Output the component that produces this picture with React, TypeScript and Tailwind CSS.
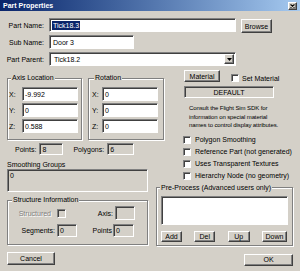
import type { ReactNode } from 'react'

// classic win2k 3d edges
const sunken =
  'border border-t-[#808080] border-l-[#808080] border-b-white border-r-white shadow-[inset_1px_1px_0_#404040]'
const raised =
  'border border-t-white border-l-white border-b-[#404040] border-r-[#404040] shadow-[inset_-1px_-1px_0_#808080]'

function Field({ className, gray, children }: { className: string; gray?: boolean; children?: ReactNode }) {
  return (
    <div className={`${sunken} ${gray ? 'bg-[#d4d0c8]' : 'bg-white'} flex items-center pl-[2px] shrink-0 ${className}`}>
      {children}
    </div>
  )
}

function Btn({ className, children }: { className: string; children: ReactNode }) {
  return (
    <div className={`${raised} bg-[#d4d0c8] flex items-center justify-center shrink-0 ${className}`}>{children}</div>
  )
}

function Check() {
  return <div className={`${sunken} bg-white w-[8px] h-[8px] shrink-0`} />
}

function Group({ title, legend, className, children }: { title: string; legend: string; className: string; children: ReactNode }) {
  return (
    <fieldset
      className={`border border-[#808080] shadow-[inset_1px_1px_0_#ffffff,1px_1px_0_#ffffff] shrink-0 ${className}`}
    >
      <legend className={`px-[1px] leading-[8px] bg-[#d4d0c8] ${legend}`}>{title}</legend>
      {children}
    </fieldset>
  )
}

function CheckRow({ label }: { label: string }) {
  return (
    <div className="flex items-center h-[12px] ml-[27px]">
      <Check />
      <span className="ml-[4px]">{label}</span>
    </div>
  )
}

export default function App() {
  return (
    <div className="w-[300px] h-[271px] overflow-hidden bg-[#d4d0c8] font-['Liberation_Sans',Arial,sans-serif] text-[7px] leading-none text-black flex flex-col">
      {/* Title bar */}
      <div className="h-[11px] shrink-0 flex items-center justify-between pl-[3px] pr-[3px] bg-linear-to-r from-[#0a246a] to-[#a6caf0]">
        <span className="text-white font-bold">Part Properties</span>
        <div className={`${raised} bg-[#d4d0c8] w-[9px] h-[8px] flex items-center justify-center`}>
          <svg width="5" height="4" viewBox="0 0 5 4">
            <path d="M0.5 0.5 L4.5 3.5 M4.5 0.5 L0.5 3.5" stroke="#000" strokeWidth="1.1" />
          </svg>
        </div>
      </div>

      {/* Name rows */}
      <div className="mt-[7px] flex flex-col gap-[3px]">
        <div className="flex items-center h-[14px]">
          <span className="w-[44px] text-right">Part Name:</span>
          <Field className="ml-[5px] w-[187px] h-[14px]">
            <span className="bg-[#0a246a] text-white px-[1px] py-[1px]">Tick18.3</span>
          </Field>
          <Btn className="ml-[5px] mt-[2px] w-[31px] h-[14px]">Browse</Btn>
        </div>
        <div className="flex items-center h-[14px]">
          <span className="w-[44px] text-right">Sub Name:</span>
          <Field className="ml-[5px] w-[85px] h-[14px]">
            <span className="pl-[1px]">Door 3</span>
          </Field>
        </div>
        <div className="flex items-center h-[14px]">
          <span className="w-[44px] text-right">Part Parent:</span>
          <Field className="ml-[5px] w-[187px] h-[14px] justify-between pr-[1px]">
            <span className="pl-[2px]">Tick18.2</span>
            <Btn className="w-[10px] h-[10px]">
              <svg width="5" height="3" viewBox="0 0 5 3">
                <path d="M0 0 H5 L2.5 3 Z" fill="#000" />
              </svg>
            </Btn>
          </Field>
        </div>
      </div>

      <div className="mt-[4px] flex items-start">
        {/* Left column */}
        <div className="ml-[7px] w-[149px] shrink-0 flex flex-col">
          <div className="mt-[4px] flex gap-[6px] w-[157px]">
            <Group title="Axis Location" legend="ml-[3px]" className="w-[75px] pb-[6px]">
              <div className="mt-[5px] flex flex-col gap-[2px]">
                {[
                  ['X:', '-9.992'],
                  ['Y:', '0'],
                  ['Z:', '0.588'],
                ].map(([l, v]) => (
                  <div key={l} className="flex items-center">
                    <span className="w-[14px] pl-[1px]">{l}</span>
                    <Field className="w-[56px] h-[14px]">{v}</Field>
                  </div>
                ))}
              </div>
            </Group>
            <Group title="Rotation" legend="ml-[5px]" className="w-[76px] pb-[6px]">
              <div className="mt-[5px] flex flex-col gap-[2px]">
                {['X:', 'Y:', 'Z:'].map((l) => (
                  <div key={l} className="flex items-center">
                    <span className="w-[13px] pl-[3px]">{l}</span>
                    <Field className="w-[56px] h-[14px]">0</Field>
                  </div>
                ))}
              </div>
            </Group>
          </div>

          <div className="mt-[3px] flex items-center h-[12px]">
            <span className="ml-[8px]">Points:</span>
            <Field gray className="ml-[3px] w-[24px] h-[12px]">8</Field>
            <span className="ml-[10px]">Polygons:</span>
            <Field gray className="ml-[3px] w-[27px] h-[12px]">6</Field>
          </div>

          <span className="mt-[6px] leading-[8px]">Smoothing Groups</span>
          <Field gray className="w-[141px] h-[23px] items-start pt-[2px]">0</Field>

          <Group title="Structure Information" legend="ml-[4px]" className="mt-[4px] w-[141px] pb-[7px]">
            <div className="mt-[2px] flex items-center h-[14px]">
              <span className="w-[43px] text-right text-[#808080] [text-shadow:1px_1px_0_#fff]">Structured</span>
              <div className={`${sunken} ml-[6px] w-[9px] h-[9px] bg-[#d4d0c8]`} />
              <span className="w-[47px] text-right">Axis:</span>
              <Field gray className="ml-[2px] w-[20px] h-[14px]" />
            </div>
            <div className="mt-[4px] flex items-center h-[13px]">
              <span className="w-[47px] text-right">Segments:</span>
              <Field gray className="ml-[2px] w-[20px] h-[13px]">0</Field>
              <span className="w-[35px] text-right">Points</span>
              <Field gray className="ml-[1px] w-[21px] h-[13px]">0</Field>
            </div>
          </Group>

          <Btn className="mt-[7px] w-[48px] h-[13px]">Cancel</Btn>
        </div>

        {/* Right column */}
        <div className="w-[137px] shrink-0 flex flex-col">
          <div className="ml-[28px] flex items-start h-[12px]">
            <Btn className="w-[36px] h-[12px]">Material</Btn>
            <div className="ml-[11px] mt-[4px] flex items-center">
              <Check />
              <span className="ml-[3px]">Set Material</span>
            </div>
          </div>
          <div className={`${sunken} ml-[28px] mt-[4px] w-[90px] h-[12px] flex items-center justify-center`}>
            DEFAULT
          </div>
          <p className="mt-[6px] ml-[33px] text-[6px] leading-[8.5px] tracking-[-0.1px] whitespace-nowrap">
            Consult the Flight Sim SDK for
            <br />
            information on special material
            <br />
            names to control display attributes.
          </p>
          <div className="mt-[4px] flex flex-col">
            <CheckRow label="Polygon Smoothing" />
            <CheckRow label="Reference Part (not generated)" />
            <CheckRow label="Uses Transparent Textures" />
            <CheckRow label="Hierarchy Node (no geometry)" />
          </div>

          <Group title="Pre-Process (Advanced users only)" legend="ml-[3px]" className="mt-[2px] w-[137px] pb-[3px]">
            <Field className="mt-[4px] ml-[4px] w-[127px] h-[29px]" />
            <div className="mt-[6px] ml-[4px] w-[126px] flex justify-between">
              <Btn className="w-[21px] h-[11px]">Add</Btn>
              <Btn className="w-[21px] h-[11px]">Del</Btn>
              <Btn className="w-[22px] h-[11px]">Up</Btn>
              <Btn className="w-[25px] h-[11px]">Down</Btn>
            </div>
          </Group>

          <Btn className="mt-[8px] self-end w-[49px] h-[12px]">OK</Btn>
        </div>
      </div>
    </div>
  )
}
